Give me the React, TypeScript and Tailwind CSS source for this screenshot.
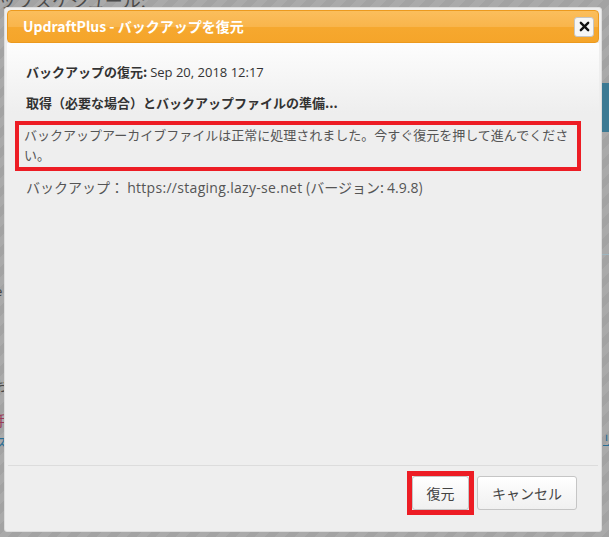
import React from 'react'

const jp = "font-['Noto_Sans_CJK_JP','Noto_Sans',sans-serif]"
const latin = "font-['Open_Sans','Noto_Sans_CJK_JP',sans-serif]"

function CloseIcon() {
  return (
    <svg viewBox="0 0 12 12" className="h-[11px] w-[11px]">
      <path d="M2 2 L10 10 M10 2 L2 10" stroke="#111" strokeWidth="2.6" strokeLinecap="round" />
    </svg>
  )
}

export default function App() {
  return (
    <div className="relative h-[537px] w-[609px] overflow-hidden bg-[repeating-linear-gradient(135deg,#aaaaaa_0px,#aaaaaa_7px,#a3a3a3_7px,#a3a3a3_14px)]">
      {/* page content showing through the overlay */}
      <div className={`absolute left-[-2px] top-[-9px] text-[18px] leading-none text-[#4a4a4a] ${jp}`}>ップスケジュール:</div>
      <div className="absolute left-[602px] top-[83px] h-[49px] w-[10px] bg-[#3c7a94]" />
      <div className="absolute left-[602px] top-[254px] h-px w-[10px] bg-[#9eb6c0]" />
      <div className={`absolute left-[603px] top-[432px] text-[13px] leading-none text-[#2a6f96] underline ${jp}`}>リ</div>
      <div className={`absolute left-[-5px] top-[282px] text-[13px] text-[#444] ${latin}`}>e</div>
      <div className={`absolute left-[-6px] top-[375px] text-[14px] text-[#444] ${jp}`}>お</div>
      <div className={`absolute left-[-6px] top-[410px] text-[14px] text-[#9a3a5a] ${jp}`}>手</div>
      <div className={`absolute left-[-6px] top-[432px] text-[14px] text-[#2a6f96] ${jp}`}>ス</div>

      <div className="relative ml-[4px] mt-[7px] flex h-[525px] w-[598px] flex-col rounded-[3px] border border-[#dddddd] bg-[#eeeeee] p-[2px]">
        {/* title bar */}
        <div className="flex h-[33px] items-center justify-between rounded-[4px] border border-[#ec9a1e] bg-[linear-gradient(to_bottom,#fbbe5c_0%,#f9b54c_50%,#f6a82f_52%,#f5a52a_100%)] pl-[15px] pr-[4px]">
          <span className={`text-[14px] font-bold text-white ${jp}`}>UpdraftPlus - バックアップを復元</span>
          <button className="flex h-[20px] w-[20px] items-center justify-center rounded-[3px] border border-[#c5c5c5] bg-[#f6f6f6]">
            <CloseIcon />
          </button>
        </div>

        {/* body */}
        <div className="flex-1 bg-[linear-gradient(to_bottom,#fdfdfd_0px,#eeeeee_70px)] pl-[8px] pr-[18px] pt-[19px] text-[13px] leading-[20px]">
          <p className={`pl-[11px] text-[#333] ${jp}`}>
            <span className="font-bold">バックアップの復元:</span>{' '}
            <span className={latin}>Sep 20, 2018 12:17</span>
          </p>
          <p className={`mt-[11px] pl-[11px] font-bold text-[#333] ${jp}`}>
            取得（必要な場合）とバックアップファイルの準備...
          </p>
          <div className={`mt-[8px] border-4 border-[#ed1c24] pb-[2px] pl-[5px] pr-[4px] text-[#555] ${jp}`}>
            バックアップアーカイブファイルは正常に処理されました。今すぐ復元を押して進んでください。
          </div>
          <p className={`mt-[6px] pl-[11px] text-[14px] text-[#555] ${jp}`}>
            バックアップ：{' '}
            <span className={`tracking-[0.3px] ${latin}`}>https://staging.lazy-se.net</span> (バージョン:{' '}
            <span className={latin}>4.9.8</span>)
          </p>
        </div>

        {/* footer */}
        <div className="mx-[1px] flex h-[64px] items-start justify-end gap-[8px] border-t border-[#dcdcdc] pr-[21px] pt-[10px]">
          <div className="-m-[5px] border-[5px] border-[#ed1c24]">
            <button
              className={`block h-[34px] w-[57px] rounded-[3px] border border-[#c5c5c5] bg-[linear-gradient(to_bottom,#ffffff,#f0f0f0)] text-[14px] text-[#444] ${jp}`}
            >
              復元
            </button>
          </div>
          <button
            className={`h-[34px] w-[100px] rounded-[3px] border border-[#c5c5c5] bg-[linear-gradient(to_bottom,#ffffff,#f0f0f0)] text-[14px] text-[#444] ${jp}`}
          >
            キャンセル
          </button>
        </div>
      </div>
    </div>
  )
}
